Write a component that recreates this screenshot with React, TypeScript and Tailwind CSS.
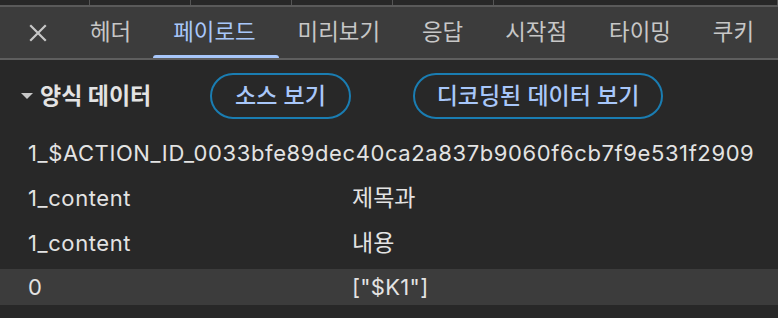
import React from 'react';

const tabs = ['헤더', '페이로드', '미리보기', '응답', '시작점', '타이밍', '쿠키'];

const rows = [
    { key: '1_content', value: '제목과' },
    { key: '1_content', value: '내용' },
];

const font = { fontFamily: '"Inter", "Noto Sans CJK KR", sans-serif' };

const App: React.FC = () => {
    return (
        <div className="w-[778px] h-[318px] bg-[#282828] overflow-hidden text-[23px]" style={font}>
            {/* strip of the panel above */}
            <div className="flex h-[5px] bg-[#282828] border-b-2 border-[#5a5a5a] box-content">
                {[90, 101, 101, 101, 101, 284].map((w, i) => (
                    <div key={i} className="h-full shrink-0 border-r border-[#555]" style={{ width: w }} />
                ))}
            </div>

            {/* tab bar */}
            <div className="flex items-stretch h-[51px] bg-[#3c3c3c] border-b-2 border-[#5e5e5e] box-content overflow-hidden text-[22.4px]">
                <div className="w-[69px] shrink-0 flex items-center justify-center">
                    <svg width="20" height="20" viewBox="0 0 20 20" className="ml-[7px]">
                        <path d="M3 3 L17 17 M17 3 L3 17" stroke="#c7c7c7" strokeWidth="2.2" strokeLinecap="square" />
                    </svg>
                </div>
                {tabs.map((t, i) => (
                    <div
                        key={t}
                        className={`relative shrink-0 whitespace-nowrap flex items-center px-[21px] leading-none ${
                            i === 1 ? 'text-[#a8c7fa]' : 'text-[#c7c7c7]'
                        }`}
                    >
                        {t}
                        {i === 1 && (
                            <div className="absolute left-[1px] right-[-2px] bottom-0 h-[3px] rounded-t-[3px] bg-[#a8c7fa]" />
                        )}
                    </div>
                ))}
            </div>

            {/* form data header */}
            <div className="flex items-center h-[46px] mt-[13px]">
                <div className="flex items-center pl-[20px] w-[210px] shrink-0">
                    <svg width="14" height="8" viewBox="0 0 14 8" className="mr-[6px]">
                        <path d="M1 1 L13 1 L7 7 Z" fill="#c7c7c7" />
                    </svg>
                    <span className="font-bold text-[#e3e3e3] leading-none whitespace-nowrap">양식 데이터</span>
                </div>
                <button className="h-[46px] w-[141px] shrink-0 rounded-full border-2 border-[#1a7db2] text-[#a8c7fa] font-medium leading-none whitespace-nowrap">
                    소스 보기
                </button>
                <button className="ml-[62px] h-[46px] w-[250px] shrink-0 rounded-full border-2 border-[#1a7db2] text-[#a8c7fa] font-medium leading-none whitespace-nowrap">
                    디코딩된 데이터 보기
                </button>
            </div>

            {/* rows */}
            <div className="flex flex-col mt-[16px] text-[#e3e3e3] text-[22px] tracking-[0.6px]">
                <div className="flex items-center h-[36px] pl-[28px] whitespace-nowrap">
                    1_$ACTION_ID_0033bfe89dec40ca2a837b9060f6cb7f9e531f2909
                </div>
                {rows.map((r, i) => (
                    <div key={i} className="flex items-center h-[36px] mt-[9px] pl-[28px]">
                        <span className="w-[324px] shrink-0">{r.key}</span>
                        <span className="text-[23px] tracking-normal">{r.value}</span>
                    </div>
                ))}
                <div className="flex items-center h-[36px] mt-[8px] pl-[28px] bg-[#3c3c3c]">
                    <span className="w-[324px] shrink-0">0</span>
                    <span className="tracking-[0.3px]">["$K1"]</span>
                </div>
            </div>
        </div>
    );
};

export default App;
